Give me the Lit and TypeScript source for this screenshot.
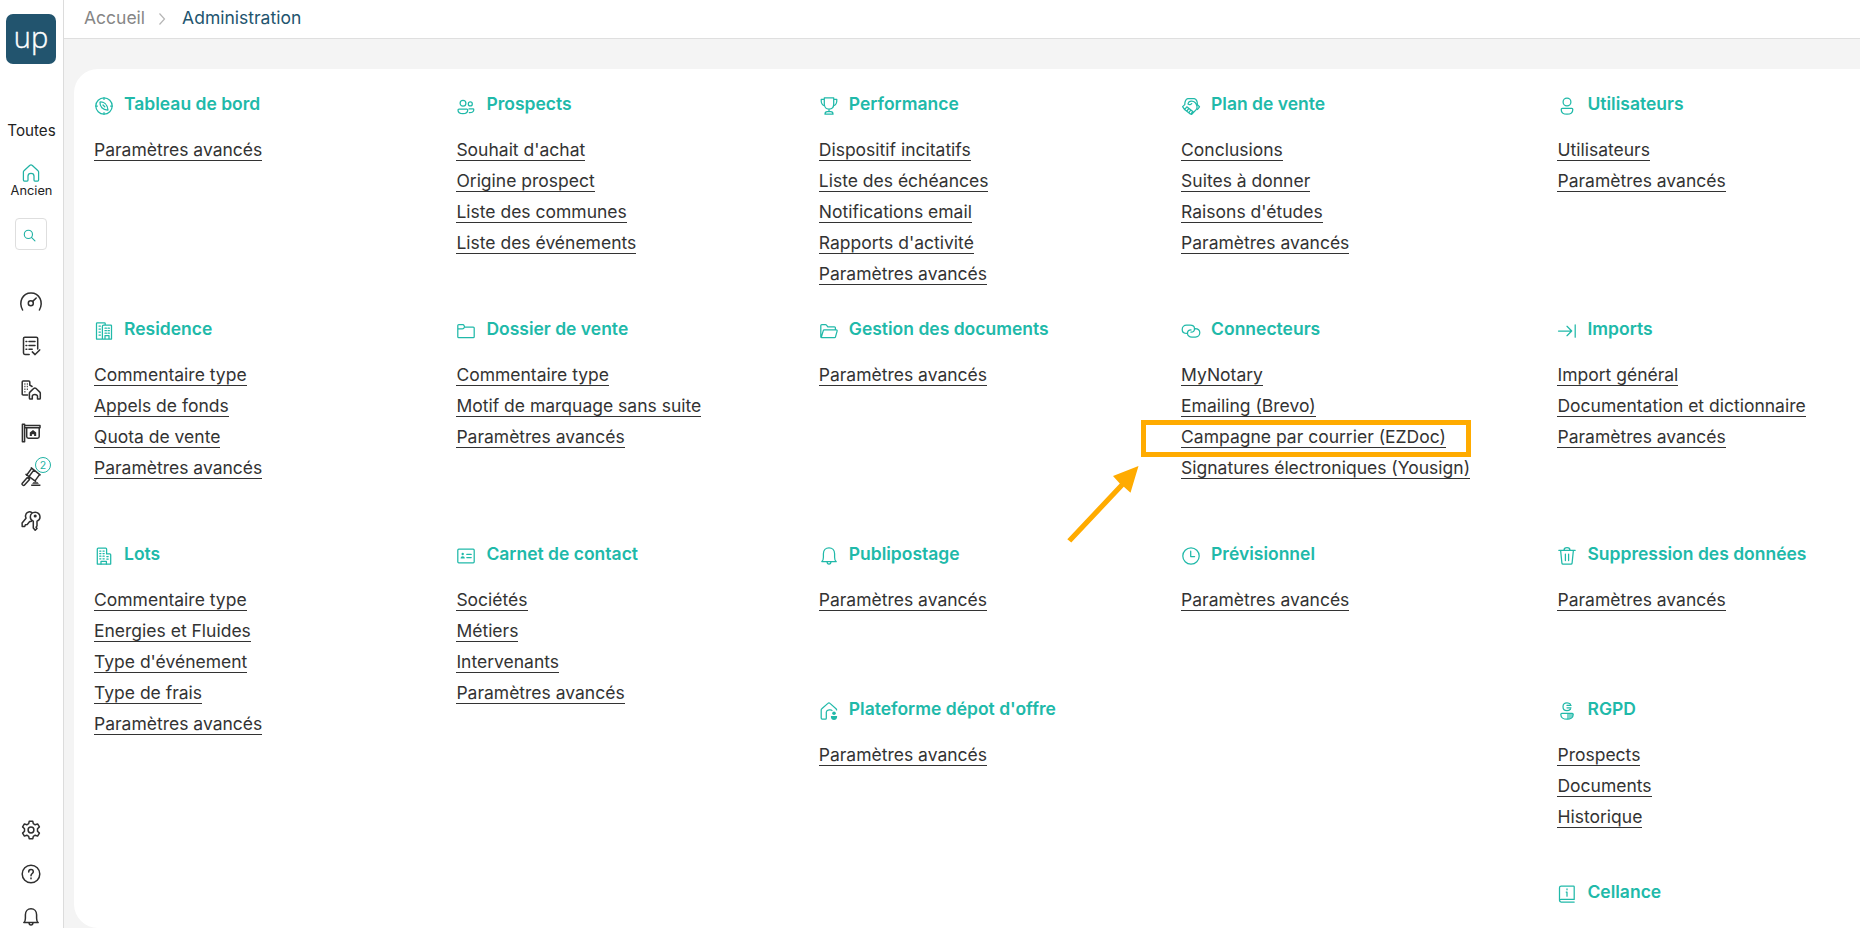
import { LitElement, html, svg, css } from 'lit';
import { customElement, property } from 'lit/decorators.js';
import { classMap } from 'lit/directives/class-map.js';

/* Line icons, drawn on a 20x20 grid */
const ICONS: Record<string, unknown> = {
  compass: svg`<circle cx="10" cy="10" r="8.2" /><path d="M10 1.8v1.6M10 16.6v1.6M1.8 10h1.6M16.6 10h1.6" /><path d="M6 6c3.4-.3 7.2 1.8 8 8-5.3.2-8.4-3.4-8-8zM9 9l1.8 1.8" />`,
  people: svg`<circle cx="7" cy="7.2" r="2.9" /><circle cx="14.3" cy="7.9" r="2" /><path d="M3 13h7.8c.6 0 .9.4.9.9 0 2.4-2 3.7-4.8 3.7S2 16.3 2 13.9c0-.5.4-.9 1-.9zM13 12.9h4c.5 0 .8.4.8.8 0 2-1.7 3-4.5 2.9" />`,
  trophy: svg`<path d="M5.3 1.8h9.4v6.4c0 2.9-2 4.8-4.7 4.8s-4.7-1.9-4.7-4.8zM5.3 3.4H2.2c-.2 3 1 5.8 3.5 6.6M14.7 3.4h3.1c.2 3-1 5.8-3.5 6.6M10 13v2.7M6 18.2c0-1.600 1-2.500 2.300-2.500h3.400c1.300 0 2.300.9 2.300 2.500z" />`,
  handshake: svg`<path d="M3.800 8.600C3.800 5.800 4.800 3.300 6.800 2.700h6.400c1.900.5 3.200 2.800 3.200 5.900l2.100 2.200-2 2.700M3.800 8.600l-2.200 2 2 3M7 8c.4-2 1.900-3 3.700-2.900 2.500.1 4.600 2.300 5.300 5.300.3 1.500 0 2.400-.8 3.200L11 18c-.6.500-1.200.4-1.700-.1l-5.700-4.300M7 8c1.400 1.200 2.900.6 3.700-.4M3.600 13.600l2.200-2.800 6 4.700-1.800 2.300M7.800 12.500l-2 2.600M9.800 14l-1.900 2.600" />`,
  user: svg`<circle cx="10" cy="6" r="3.9" /><path d="M5.2 12.4h9.6c.6 0 1 .4 1 1 0 2.900-2.400 4.800-5.800 4.800s-5.800-1.900-5.800-4.800c0-.6.4-1 1-1z" />`,
  buildings: svg`<path d="M2.5 18V2.6c0-.4.3-.7.7-.7h7.300c.4 0 .7.300.7.700V4h5.600c.4 0 .7.300.7.700V18zM8.400 18V5.300c0-.7.5-1.300 1.200-1.300h1.600M11 18v-3.400h4V18" /><path d="M5 5h1.400M5 8h1.400M5 11h1.400M5 14h1.400M11 7.200h1.400M14 7.200h1.400M11 9.700h1.400M14 9.700h1.400M11 12.200h1.400M14 12.200h1.400" />`,
  folder: svg`<path d="M1.800 15.700V4.600c0-.6.400-1 1-1h4c.6 0 1 .3 1.200.8l.6 1.700h8.600c.6 0 1 .4 1 1v8.600c0 .6-.4 1-1 1H2.800c-.6 0-1-.4-1-1zM1.800 7.900h4.600c.9 0 1.700-.7 2-1.800" />`,
  folderOpen: svg`<path d="M1.800 15.700V4.600c0-.6.400-1 1-1h3.700c.4 0 .8.200 1 .5l1.300 1.700h6.600c.6 0 1 .4 1 1v2M2.200 16.500L4.300 9.600c.1-.5.500-.8 1-.8h11.900c.7 0 1.100.6.9 1.300l-1.600 5.700c-.1.500-.5.900-1 .9H2.800c-.6 0-1-.4-1-1" />`,
  link: svg`<path d="M6 12.400C3 12.400 1.200 10.600 1.200 8.400S3 4.200 5.500 4.200h3.600c2.600 0 4.400 1.500 4.400 3.500S12 11.200 10 11.200M14 7.600c3 0 4.800 1.900 4.800 4.200S16.900 16 14.500 16h-3.600c-2.600 0-4.400-1.600-4.400-3.600S8 8.900 10 8.900" />`,
  importTo: svg`<path d="M1.500 10h13.200M10 5.300l4.700 4.700-4.700 4.700M18.200 3.800v12.400" />`,
  building: svg`<path d="M3.300 18V2.900c0-.5.400-.9.900-.9h7.500c.5 0 .9.400.9.900v5h3.200c.5 0 .9.400.9.900V18z" /><path d="M5.700 5h1.200M9 5h1.200M5.700 7.600h1.200M9 7.600h1.200M5.700 10.200h1.200M9 10.200h1.200M5.700 12.800h1.200M9 12.800h1.200M12.800 10.500h1.400M12.800 13h1.400M7 18v-2.600h5.400V18" />`,
  card: svg`<rect x="1.800" y="3.200" width="16.400" height="13.600" rx="1" /><path d="M10.800 8.400h4.400M10.800 11.600h4.400" /><circle class="fill" cx="6.700" cy="8" r="1.200" /><path class="fill" d="M4.600 12.600c0-1.600.9-2.400 2.100-2.400s2.100.8 2.100 2.400z" />`,
  bell: svg`<path d="M2.800 15.600c1.300-.8 1.600-2.500 1.600-4.300V7.800c0-3.500 2.300-6 5.600-6s5.600 2.500 5.600 6v3.500c0 1.800.3 3.500 1.600 4.300zM8 15.800c.1 1.500.9 2.300 2 2.300s1.900-.8 2-2.300" />`,
  clock: svg`<circle cx="10" cy="10" r="8.2" /><path d="M9.700 5.200v5.400h3.900" />`,
  trash: svg`<path d="M1.800 4.300h16.400M3.600 4.300l1.300 12.800c.1.600.5 1 1.100 1h8c.6 0 1-.4 1.100-1l1.300-12.800M7 4.200c0-1.500 1.200-2.500 3-2.500s3 1 3 2.500M8.400 8v6.500M11.600 8v6.500" />`,
  homeUser: svg`<path d="M13 9.500C12.500 8.700 7.800 8.200 7.300 11v6.200c0 .6-.4.900-.9.900H3.200c-.6 0-1-.4-1-1V9c0-.5.200-.9.600-1.200l6.100-5.400c.6-.6 1.500-.6 2.100 0l6 5.300c.4.400.6.800.6 1.200" /><circle class="fill" cx="15" cy="12.200" r="1.800" /><path class="fill" d="M11.900 14.900h6.200c.2 2.600-1 4-3.100 4s-3.300-1.400-3.100-4z" />`,
  privacy: svg`<path d="M13.400 3.200C12.500 2.200 11.500 1.800 10 1.800c-2.300 0-4 1.700-4 3.900s1.700 3.900 4 3.900c1.500 0 2.500-.5 3.400-1.400M10 4.400h4M10 6.800h4M4.800 12.400h10.400c.6 0 1 .4 1 1 0 2.900-2.600 4.800-6.200 4.800s-6.200-1.900-6.200-4.800c0-.6.400-1 1-1z" /><path class="fill soft" d="M10 12.400h5.400c.5 0 .8.400.8 1 0 2.900-2.600 4.800-6.200 4.800z" />`,
  book: svg`<path d="M4 15.400h13.200V2.800c0-.5-.3-.8-.8-.8H4.200c-1 0-1.700.7-1.700 1.700v12.600c0 1 .7 1.700 1.700 1.700h13M2.500 16.800c0-.9.600-1.400 1.500-1.400M10 8v4.200M9.200 8h.8M10 4.800v1" />`,
  home: svg`<path d="M2.400 17V8.900c0-.5.200-.9.600-1.200L8.900 2.300c.6-.6 1.600-.6 2.200 0L17 7.700c.4.300.6.700.6 1.200V17c0 .6-.4 1-1 1h-2.700c-.5 0-.9-.4-.9-.9v-4c0-1.800-1.300-2.800-3-2.800s-3 1-3 2.800v4c0 .5-.4.900-.9.900H3.400c-.6 0-1-.4-1-1z" />`,
  search: svg`<circle cx="8.300" cy="8.300" r="6.300" /><path d="M13 13l5.400 5.400" />`,
  gauge: svg`<path d="M1.600 18C-2.800 10 1.600.9 10 .9S22.800 10 18.400 18" /><circle cx="9.800" cy="11.300" r="2.500" /><path d="M11.700 9.400l3.500-3.400" />`,
  checklist: svg`<path d="M8.200 18.400H3.900c-.8 0-1.400-.6-1.400-1.400V2.600c0-.8.600-1.400 1.400-1.400h11.400c.8 0 1.400.6 1.400 1.400V13M8 5.600h6M8 9.400h6M8 13.200h3.200M5 5.600h.8M5 9.400h.8M5 13.200h.8M11.300 15.900l2.800 2.700 4.600-4.700" />`,
  buildingHome: svg`<path d="M6.600 15H2.200c-.6 0-1-.4-1-1V2c0-.6.4-1 1-1h5.600c.6 0 1 .4 1 1v3.200l2.300 1.300" /><path class="dots" d="M3.400 4h3.600M3.400 6.600h3.600M3.400 9.200h3.600M3.400 11.800h2.400" /><path d="M9.200 19c-.5 0-.8-.3-.8-.8v-5.100c0-.4.200-.7.500-1l4-3.800c.6-.5 1.300-.5 1.900 0l4 3.800c.3.300.5.600.5 1v5.100c0 .5-.3.800-.8.800h-2v-2.700c0-1-1-1.800-2.600-1.800s-2.600.8-2.600 1.800V19z" />`,
  sign: svg`<path d="M1.400 1.200h2.200v17.600H1.400zM3.600 2.400h15.400v2.400H3.600M18.200 4.800v8.800c0 1-.7 1.700-1.700 1.700H7.400c-1 0-1.700-.7-1.700-1.700V4.800" /><path class="fill" d="M8.800 13V9.500L12 7.100l3.200 2.400V13h-2.100v-1.700h-2.200V13z" />`,
  gavel: svg`<path d="M10.300.9l8.800 7M10.600 1.400L5.600 8.200M18.500 7.600l-4.300 6M5 7.400l9.600 7M12.600 3.400L8.400 9M8.200 9.600l-1.300 1.600-.8-.5-5 5.800c-.7.900 1.400 2.600 2.200 1.800l5.200-5.900-.7-.6 1.400-1.600" /><path class="fill" d="M12.300 15.200h4.400l1.200 1.500h-6.800zM10.200 17.500h9.200V19h-9.200z" />`,
  keys: svg`<path d="M12.300 10.200v6.900l1.900 2.200 1.800-1.800-.9-1.300.9-1.400v-4.600c1.900-.7 3-2.200 3-4.200 0-2.800-2-4.700-4.800-4.700S9.300 3.200 9.300 6c0 1.900 1.100 3.400 3 4.200zM11 1.700C8.800.2 6.300.8 5.200 2.600 4.200 4.200 4.300 5.800 5 7.200L1.100 12l.1 3.400 2.500.2.700-1.900 1.800-.3 2.500-3c.6.100 1.200 0 1.700-.2" /><circle cx="14.200" cy="5" r=".8" />`,
  gear: svg`<path d="M8.200 1.300h3.600l.5 2.400 1.900 1.100 2.400-.9 1.800 3-1.900 1.800v2.600l1.900 1.800-1.800 3-2.400-.9-1.900 1.100-.5 2.400H8.200l-.5-2.400-1.900-1.100-2.400.9-1.800-3 1.900-1.800V8.700L1.600 6.900l1.800-3 2.400.9 1.900-1.100z" /><circle cx="10" cy="10" r="2.900" />`,
  help: svg`<circle cx="10" cy="10" r="8.8" /><path d="M7.700 8c0-1.500.9-2.500 2.300-2.500s2.300.9 2.300 2.200c0 1.900-2.300 1.800-2.300 4.100M10 14v.7" />`,
};

interface Section {
  title: string;
  icon: string;
  links: string[];
  tall?: boolean;
  marked?: string;
}

const ADVANCED = 'Paramètres avancés';

// Listed row by row; null leaves the cell empty
const SECTIONS: (Section | null)[] = [
  { title: 'Tableau de bord', icon: 'compass', links: [ADVANCED] },
  { title: 'Prospects', icon: 'people', links: ["Souhait d'achat", 'Origine prospect', 'Liste des communes', 'Liste des événements'] },
  { title: 'Performance', icon: 'trophy', links: ['Dispositif incitatifs', 'Liste des échéances', 'Notifications email', "Rapports d'activité", ADVANCED] },
  { title: 'Plan de vente', icon: 'handshake', links: ['Conclusions', 'Suites à donner', "Raisons d'études", ADVANCED] },
  { title: 'Utilisateurs', icon: 'user', links: ['Utilisateurs', ADVANCED] },

  { title: 'Residence', icon: 'buildings', links: ['Commentaire type', 'Appels de fonds', 'Quota de vente', ADVANCED] },
  { title: 'Dossier de vente', icon: 'folder', links: ['Commentaire type', 'Motif de marquage sans suite', ADVANCED] },
  { title: 'Gestion des documents', icon: 'folderOpen', links: [ADVANCED] },
  {
    title: 'Connecteurs',
    icon: 'link',
    links: ['MyNotary', 'Emailing (Brevo)', 'Campagne par courrier (EZDoc)', 'Signatures électroniques (Yousign)'],
    marked: 'Campagne par courrier (EZDoc)',
  },
  { title: 'Imports', icon: 'importTo', links: ['Import général', 'Documentation et dictionnaire', ADVANCED] },

  { title: 'Lots', icon: 'building', links: ['Commentaire type', 'Energies et Fluides', "Type d'événement", 'Type de frais', ADVANCED], tall: true },
  { title: 'Carnet de contact', icon: 'card', links: ['Sociétés', 'Métiers', 'Intervenants', ADVANCED], tall: true },
  { title: 'Publipostage', icon: 'bell', links: [ADVANCED] },
  { title: 'Prévisionnel', icon: 'clock', links: [ADVANCED] },
  { title: 'Suppression des données', icon: 'trash', links: [ADVANCED] },

  { title: "Plateforme dépot d'offre", icon: 'homeUser', links: [ADVANCED] },
  null,
  { title: 'RGPD', icon: 'privacy', links: ['Prospects', 'Documents', 'Historique'] },

  null,
  null,
  null,
  null,
  { title: 'Cellance', icon: 'book', links: [] },
];

@customElement('ui-icon')
export class UiIcon extends LitElement {
  static styles = css`
    :host {
      display: block;
      flex: none;
      width: 20px;
      height: 20px;
    }
    svg {
      display: block;
      width: 100%;
      height: 100%;
      overflow: visible;
      fill: none;
      stroke: currentColor;
      stroke-width: var(--icon-stroke, 1.25);
      stroke-linecap: round;
      stroke-linejoin: round;
    }
    .fill {
      fill: currentColor;
      stroke: none;
    }
    .soft {
      opacity: 0.6;
    }
    .dots {
      stroke-dasharray: 1 1.4;
      stroke-linecap: butt;
    }
  `;

  @property() name = '';

  render() {
    return html`<svg viewBox="0 0 20 20" aria-hidden="true">${ICONS[this.name]}</svg>`;
  }
}

@customElement('side-nav')
export class SideNav extends LitElement {
  static styles = css`
    :host {
      display: flex;
      flex-direction: column;
      align-items: center;
      box-sizing: border-box;
      width: 64px;
      height: 100%;
      overflow: hidden;
      padding-top: 14px;
      background: #fff;
      border-right: 1px solid #dcdcdc;
      color: #2f2f2f;
    }
    .logo {
      display: flex;
      justify-content: center;
      flex: none;
      width: 50px;
      height: 50px;
      margin-right: 1px;
      border-radius: 7px;
      background: #22546e;
      color: #fff;
      font: 300 29px/45px 'Open Sans', sans-serif;
      -webkit-text-stroke: 0.4px #fff;
    }
    .scope {
      margin-top: 56px;
      font-size: 15.2px;
      line-height: 22px;
      color: #222;
    }
    .place {
      display: flex;
      flex-direction: column;
      align-items: center;
      margin-top: 21px;
      font-size: 12.8px;
      line-height: 16px;
      color: #222;
    }
    .place ui-icon {
      color: #20b2a4;
    }
    .search {
      display: flex;
      align-items: center;
      justify-content: center;
      box-sizing: border-box;
      flex: none;
      width: 32px;
      height: 32px;
      margin: 19px 1px 0 0;
      padding: 3px 4px 0 0;
      border: 1px solid #dedede;
      border-radius: 4px;
      background: #fff;
      color: #20b2a4;
    }
    .search ui-icon {
      width: 13px;
      height: 13px;
      --icon-stroke: 1.7;
    }
    .menu {
      display: flex;
      flex-direction: column;
      gap: 23.8px;
      margin: 42px 1px 0 0;
      --icon-stroke: 1.5;
    }
    .bottom {
      margin-top: auto;
      margin-bottom: 1px;
      gap: 23.4px;
    }
    .item {
      position: relative;
    }
    .badge {
      position: absolute;
      top: -10px;
      left: 14px;
      box-sizing: border-box;
      width: 16px;
      height: 16px;
      border: 1px solid #20b2a4;
      border-radius: 50%;
      background: #fff;
      color: #20b2a4;
      font-size: 10.5px;
      line-height: 15px;
      text-align: center;
    }
  `;

  render() {
    return html`
      <div class="logo">up</div>
      <div class="scope">Toutes</div>
      <div class="place"><ui-icon name="home"></ui-icon>Ancien</div>
      <button class="search" aria-label="Rechercher"><ui-icon name="search"></ui-icon></button>
      <nav class="menu">
        ${['gauge', 'checklist', 'buildingHome', 'sign', 'gavel', 'keys'].map(
          (name) => html`
            <div class="item">
              <ui-icon name=${name}></ui-icon>
              ${name === 'gavel' ? html`<span class="badge">2</span>` : null}
            </div>
          `
        )}
      </nav>
      <nav class="menu bottom">
        ${['gear', 'help', 'bell'].map((name) => html`<ui-icon name=${name}></ui-icon>`)}
      </nav>
    `;
  }
}

@customElement('app-root')
export class AppRoot extends LitElement {
  static styles = css`
    :host {
      display: grid;
      grid-template-columns: 64px 1fr;
      width: 100%;
      height: 100vh;
      overflow: hidden;
      background: #f4f4f4;
      font-family: Inter, sans-serif;
      color: #333;
    }
    .main {
      display: flex;
      flex-direction: column;
      min-width: 0;
      min-height: 0;
    }
    .topbar {
      display: flex;
      align-items: center;
      flex: none;
      box-sizing: border-box;
      height: 39px;
      padding: 0 20px 4px;
      background: #fff;
      border-bottom: 1px solid #dfdfdf;
      font-size: 17.5px;
      color: #22546e;
    }
    .parent {
      color: #868686;
    }
    .chevron {
      width: 14px;
      height: 14px;
      margin: 3px 13px 0 10px;
      fill: none;
      stroke: #b5b5b5;
      stroke-width: 1.2;
    }
    .card {
      flex: 1;
      box-sizing: border-box;
      margin: 30px 0 0 10px;
      padding: 20px 0 0 20px;
      border-radius: 24px 0 0 24px;
      background: #fff;
      min-height: 0;
    }
    .grid {
      display: grid;
      grid-template-columns: 362.4px 362.4px 362.3px 376.4px 1fr;
      grid-template-rows: 225px 225px 155px 183px 60px;
    }
    .tall {
      grid-row: span 2;
    }
    .title {
      display: flex;
      align-items: center;
      gap: 10px;
      height: 30px;
      margin: 0 0 13px;
      font-size: 17.5px;
      font-weight: 600;
      color: #20b9a9;
    }
    .title ui-icon {
      margin-top: 4px;
    }
    .title span {
      margin-bottom: 2px;
      white-space: nowrap;
    }
    .links {
      margin: 0;
      padding: 0;
      list-style: none;
    }
    .links li {
      display: flex;
      height: 31px;
      align-items: flex-end;
    }
    .link {
      position: relative;
      height: 20px;
      margin-bottom: 2px;
      border-bottom: 1px solid #333;
      font-size: 17.5px;
      line-height: 19px;
      white-space: nowrap;
    }
    .marker {
      position: absolute;
      top: -7px;
      left: -40px;
      box-sizing: border-box;
      width: 330px;
      height: 37px;
      border: 5px solid #ffab00;
    }
    .arrow {
      position: absolute;
      top: 39px;
      left: -114px;
      width: 76px;
      height: 80px;
      fill: #ffab00;
      stroke: none;
    }
  `;

  private _section(s: Section | null) {
    if (!s) return html`<div></div>`;
    return html`
      <section class=${classMap({ tall: !!s.tall })}>
        <h2 class="title"><ui-icon name=${s.icon}></ui-icon><span>${s.title}</span></h2>
        <ul class="links">
          ${s.links.map((text) => html`<li><a class="link">${text}${text === s.marked ? this._marker() : null}</a></li>`)}
        </ul>
      </section>
    `;
  }

  private _marker() {
    return html`
      <span class="marker"></span>
      <svg class="arrow" viewBox="0 0 76 80">
        <path d="M0.3 73.3L52.8 17.5L46 10L71.5 0L63.5 26.8L56.8 20.8L4.3 76.5z" />
      </svg>
    `;
  }

  render() {
    return html`
      <side-nav></side-nav>
      <div class="main">
        <header class="topbar">
          <span class="parent">Accueil</span>
          <svg class="chevron" viewBox="0 0 14 14"><path d="M4.500 1.500l5 5.500-5 5.500" /></svg>
          <span>Administration</span>
        </header>
        <main class="card">
          <div class="grid">${SECTIONS.map((s) => this._section(s))}</div>
        </main>
      </div>
    `;
  }
}
